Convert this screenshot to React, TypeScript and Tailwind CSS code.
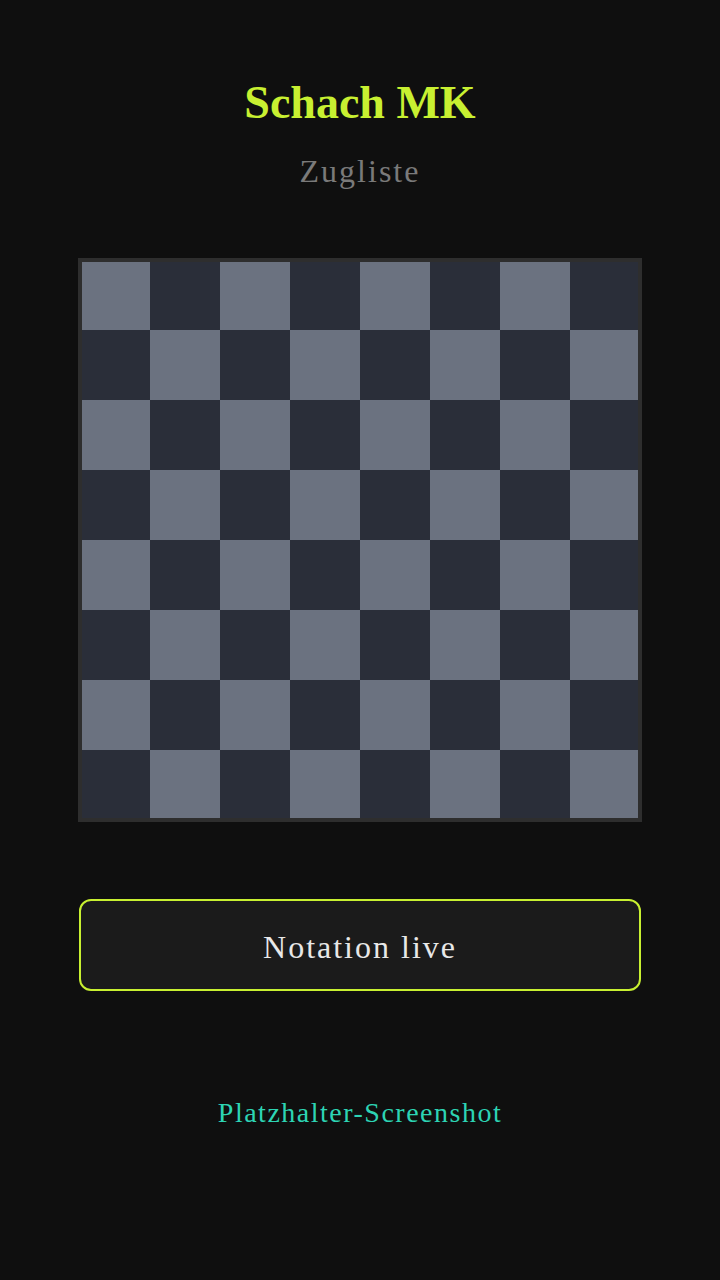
const serif = 'font-["Liberation_Serif","Times_New_Roman",serif]';

function Board() {
  const sizes = ['68px', '70px', '70px', '70px', '70px', '70px', '70px', '68px'];
  const cells = [];
  for (let r = 0; r < 8; r++) {
    for (let c = 0; c < 8; c++) {
      const light = (r + c) % 2 === 0;
      cells.push(
        <div
          key={`${r}-${c}`}
          className={light ? 'bg-[#6b7280]' : 'bg-[#2a2e39]'}
          style={{ width: sizes[c], height: sizes[r] }}
        />
      );
    }
  }
  return (
    <div className="w-[564px] h-[564px] border-4 border-[#2e2e2e] bg-[#2e2e2e]">
      <div className="grid grid-cols-[68px_repeat(6,70px)_68px]">{cells}</div>
    </div>
  );
}

export default function App() {
  return (
    <div className="min-h-[1280px] bg-[#0f0f0f] flex flex-col items-center">
      <h1 className={`${serif} mt-[80px] text-[46px] leading-none font-bold text-[#c8f031]`}>
        Schach MK
      </h1>
      <p className={`${serif} mt-[29px] text-[32px] leading-none tracking-[2px] text-[#7a7a7a]`}>
        Zugliste
      </p>
      <div className="mt-[71px]">
        <Board />
      </div>
      <button
        className={`${serif} mt-[77px] w-[562px] h-[92px] pt-[4px] rounded-xl border-2 border-[#c8f031] bg-[#1b1b1b] text-[32px] leading-none tracking-[2px] text-[#e8e8e8] flex items-center justify-center`}
      >
        Notation live
      </button>
      <p className={`${serif} mt-[108px] text-[28px] leading-none tracking-[1.5px] text-[#2dd4b4]`}>
        Platzhalter-Screenshot
      </p>
    </div>
  );
}
